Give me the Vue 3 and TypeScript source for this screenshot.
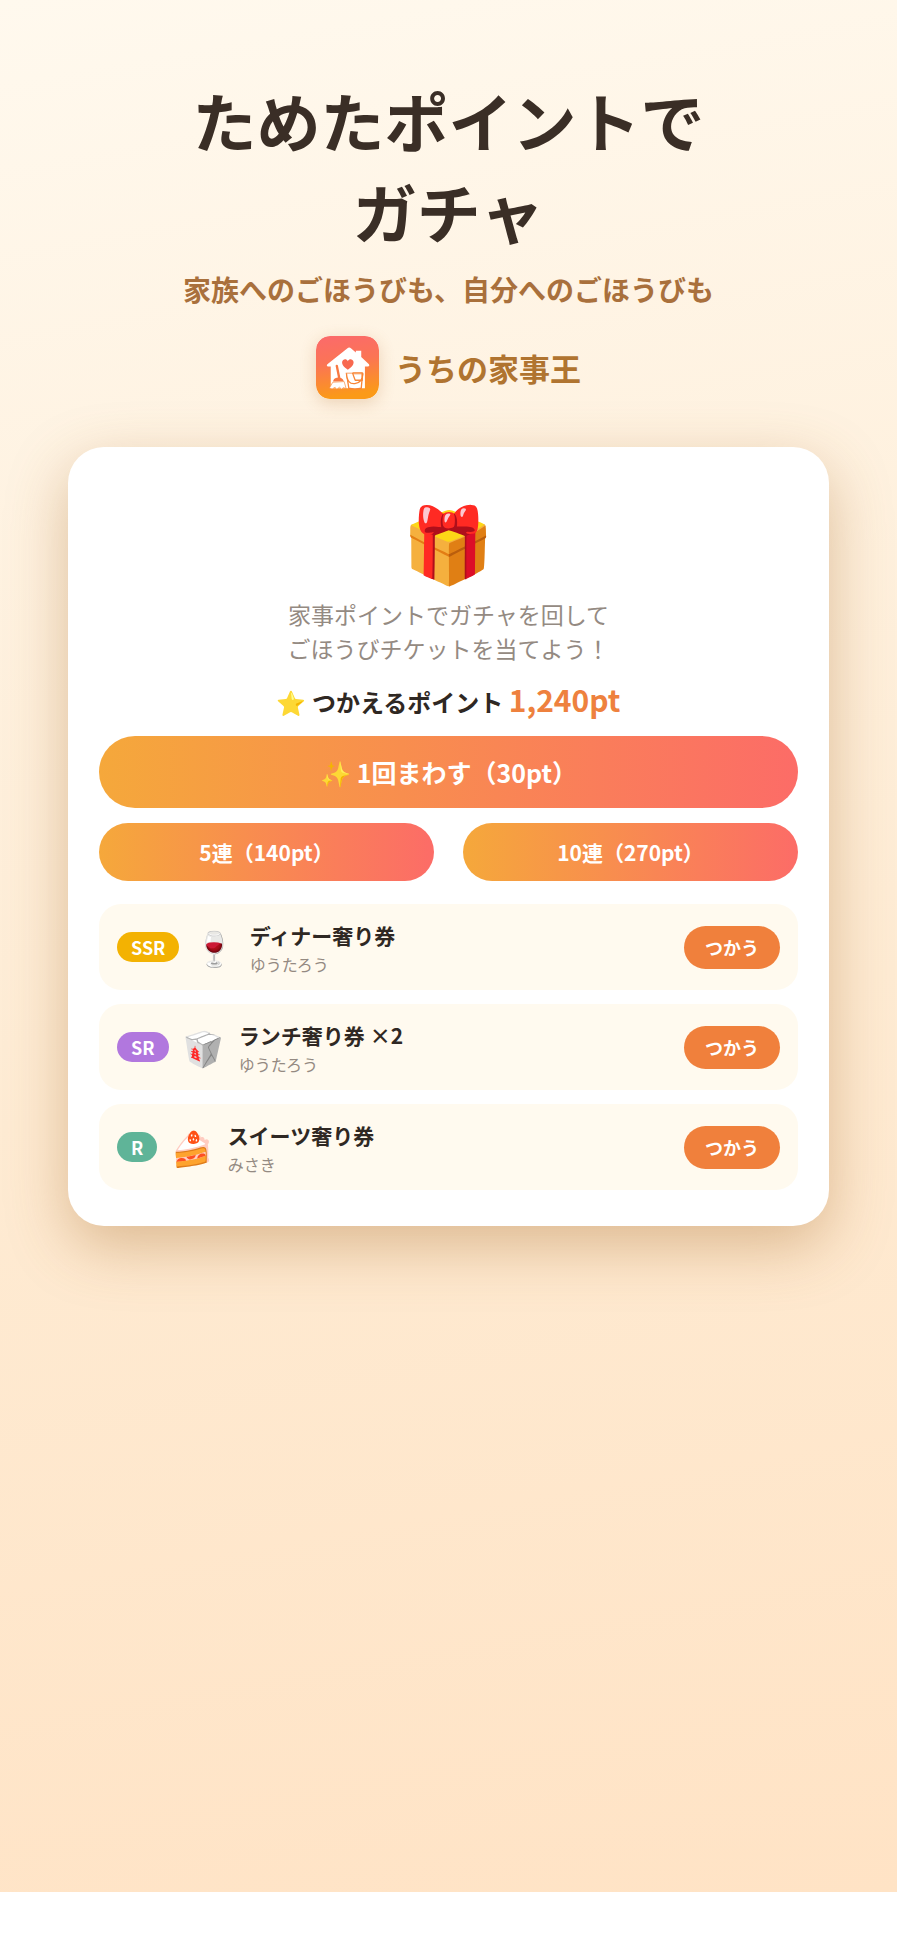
<script setup lang="ts">
interface Ticket {
  rank: 'SSR' | 'SR' | 'R'
  icon: string
  name: string
  owner: string
}

const tickets: Ticket[] = [
  { rank: 'SSR', icon: '🍷', name: 'ディナー奢り券', owner: 'ゆうたろう' },
  { rank: 'SR', icon: '🥡', name: 'ランチ奢り券 ×2', owner: 'ゆうたろう' },
  { rank: 'R', icon: '🍰', name: 'スイーツ奢り券', owner: 'みさき' },
]
</script>

<template>
  <main class="page">
    <header class="hero">
      <h1 class="title">ためたポイントで<br />ガチャ</h1>
      <p class="subtitle">家族へのごほうびも、自分へのごほうびも</p>
      <div class="brand">
        <svg class="brand-icon" viewBox="0 0 188 188" aria-hidden="true">
          <defs>
            <linearGradient id="brand-bg" x1="0" y1="0" x2="0.15" y2="1">
              <stop offset="0" stop-color="#fb6a6c" />
              <stop offset="0.45" stop-color="#fb7455" />
              <stop offset="1" stop-color="#fb9a18" />
            </linearGradient>
          </defs>
          <rect width="188" height="188" rx="42" fill="url(#brand-bg)" />
          <path
            d="M93 37Q99 32 105 37L119 49V44H135V63L158 84Q161 90 155 91H146V156H44V91H36Q30 89 34 84Z"
            fill="#fff"
          />
          <path
            d="M95 101C81 91 77 84 78 77C80 68 91 67 95 75C99 67 110 68 112 77C113 84 109 91 95 101Z"
            fill="#f8684f"
          />
          <path d="M62 89L69 124" stroke="#f87842" stroke-width="7" stroke-linecap="round" />
          <path d="M51 136Q52 125 65 124Q78 122 83 135Z" fill="#f87842" />
          <path
            d="M50 138L84 136L90 157L81 154L77 159L70 153L62 159L57 153L48 158L40 155Z"
            fill="#fff"
            stroke="#f88536"
            stroke-width="2"
          />
          <path d="M91 112H139L135 156Q116 160 98 156Z" fill="#fff" stroke="#f88536" stroke-width="4" />
          <path
            d="M91 112Q93 145 116 142Q139 140 140 112M109 110H138V132H117Q113 122 109 110"
            fill="#fff"
            stroke="#f88536"
            stroke-width="4"
            stroke-linejoin="round"
          />
        </svg>
        <span class="brand-name">うちの家事王</span>
      </div>
    </header>

    <section class="card">
      <div class="gift">🎁</div>
      <p class="lead">家事ポイントでガチャを回して<br />ごほうびチケットを当てよう！</p>
      <p class="points">⭐ つかえるポイント <strong class="amount">1,240pt</strong></p>
      <button class="draw draw-main" type="button">✨ 1回まわす（30pt）</button>
      <div class="draw-row">
        <button class="draw draw-sub" type="button">5連（140pt）</button>
        <button class="draw draw-sub" type="button">10連（270pt）</button>
      </div>
      <ul class="tickets">
        <li v-for="ticket in tickets" :key="ticket.rank" class="ticket">
          <span class="rank" :class="`rank-${ticket.rank.toLowerCase()}`">{{ ticket.rank }}</span>
          <span class="ticket-icon">{{ ticket.icon }}</span>
          <div class="ticket-text">
            <div class="ticket-name">{{ ticket.name }}</div>
            <div class="ticket-owner">{{ ticket.owner }}</div>
          </div>
          <button class="use" type="button">つかう</button>
        </li>
      </ul>
    </section>
  </main>
</template>

<style>
body {
  background: #fff;
}
</style>

<style scoped>
.page {
  box-sizing: border-box;
  min-height: 97vh;
  padding: 74px 68px 64px;
  background: linear-gradient(170deg, #fff9ee 0%, #feebd3 55%, #ffe3c5 100%);
  color: #3a2e26;
  font-family: 'Noto Sans CJK JP', 'Noto Color Emoji', sans-serif;
}

.hero {
  text-align: center;
}

.title {
  margin: 0;
  font-size: 64px;
  font-weight: 700;
  line-height: 91px;
}

.subtitle {
  margin: 12px 0 0;
  color: #a9703c;
  font-size: 28px;
  font-weight: 700;
  line-height: 42px;
}

.brand {
  display: flex;
  align-items: center;
  justify-content: center;
  gap: 16px;
  margin-top: 26px;
}

.brand-icon {
  width: 63px;
  height: 63px;
  border-radius: 14px;
  box-shadow: 0 4px 16px rgba(180, 110, 40, 0.24);
}

.brand-name {
  color: #b07430;
  font-size: 31px;
  font-weight: 700;
  line-height: 44px;
}

.card {
  margin-top: 48px;
  padding: 38px 31px 36px;
  border-radius: 36px;
  background: #fff;
  box-shadow: 0 20px 60px rgba(166, 104, 40, 0.38);
  text-align: center;
}

.gift {
  font-size: 74px;
  line-height: 108px;
}

.lead {
  margin: 4px 0 0;
  color: #948a82;
  font-size: 23px;
  line-height: 34px;
}

.points {
  margin: 10px 0 0;
  color: #2f2823;
  font-size: 24px;
  font-weight: 700;
  line-height: 48px;
}

.amount {
  color: #ee813e;
  font-size: 30px;
  font-weight: 700;
}

.draw {
  border: 0;
  border-radius: 36px;
  background: linear-gradient(90deg, #f5a83b, #fc6c67);
  color: #fff;
  font-family: inherit;
  font-weight: 700;
}

.draw-main {
  width: 100%;
  height: 72px;
  margin-top: 10px;
  font-size: 25px;
}

.draw-row {
  display: grid;
  grid-template-columns: 1fr 1fr;
  gap: 29px;
  margin-top: 15px;
}

.draw-sub {
  height: 58px;
  font-size: 21px;
}

.tickets {
  display: flex;
  flex-direction: column;
  gap: 14px;
  margin: 23px 0 0;
  padding: 0;
  list-style: none;
}

.ticket {
  display: flex;
  align-items: center;
  gap: 14px;
  padding: 14px 18px;
  border-radius: 22px;
  background: #fffaef;
  color: #2f2823;
  text-align: left;
}

.rank {
  padding: 0 14px;
  border-radius: 15px;
  color: #fff;
  font-size: 18px;
  font-weight: 700;
  line-height: 30px;
}

.rank-ssr {
  background: #f3b202;
}

.rank-sr {
  background: #b177de;
}

.rank-r {
  background: #5fb498;
}

.ticket-icon {
  font-size: 34px;
  line-height: 48px;
}

.ticket-text {
  flex: 1;
}

.ticket-name {
  font-size: 21px;
  font-weight: 700;
  line-height: 34px;
}

.ticket-owner {
  color: #948a82;
  font-size: 16px;
  line-height: 24px;
}

.use {
  height: 43px;
  padding: 0 21px;
  border: 0;
  border-radius: 22px;
  background: #f0803c;
  color: #fff;
  font-family: inherit;
  font-size: 18px;
  font-weight: 700;
}
</style>
